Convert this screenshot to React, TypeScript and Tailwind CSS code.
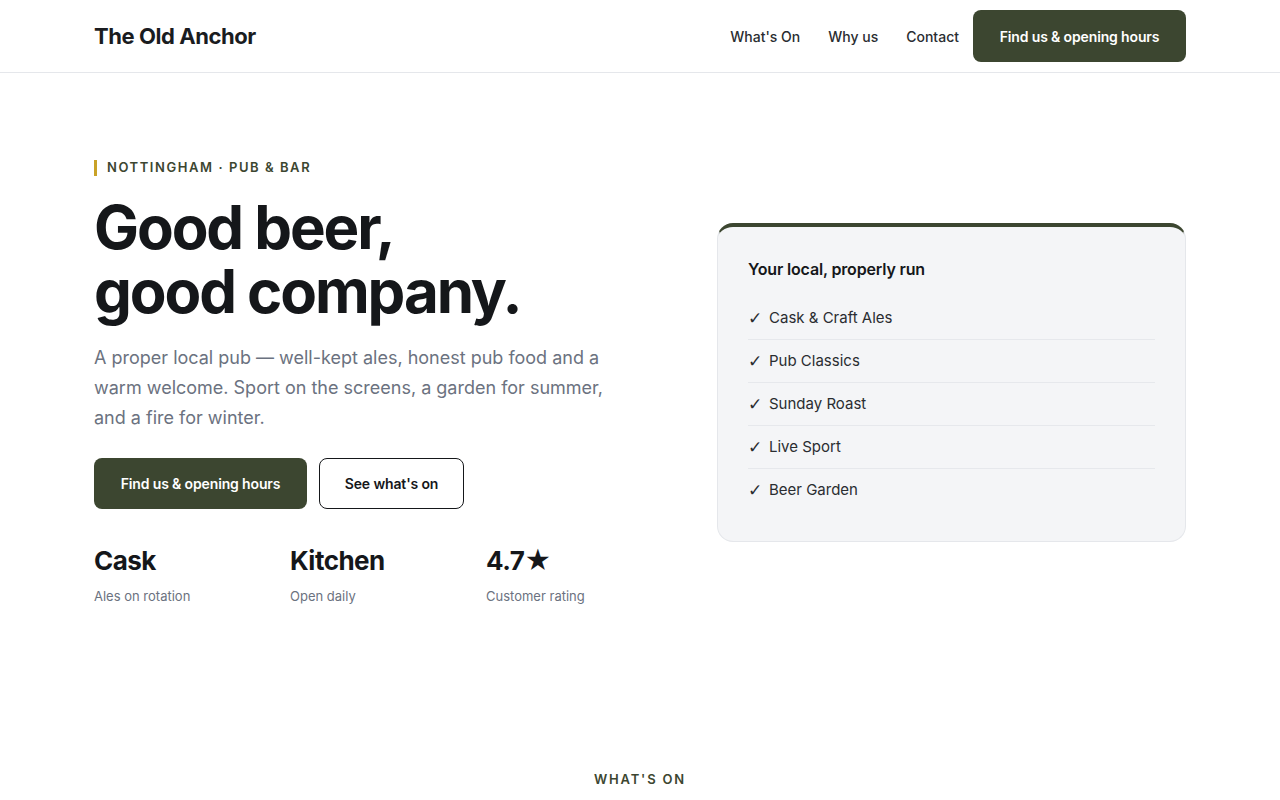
const features = ['Cask & Craft Ales', 'Pub Classics', 'Sunday Roast', 'Live Sport', 'Beer Garden']

const stats = [
  { value: 'Cask', label: 'Ales on rotation' },
  { value: 'Kitchen', label: 'Open daily' },
  { value: '4.7★', label: 'Customer rating' },
]

const display = "font-['Inter',sans-serif]"

export default function App() {
  return (
    <div className="min-h-screen bg-white font-['Inter',sans-serif] text-[#15171a]">
      {/* Header */}
      <header className="border-b border-gray-200">
        <div className="mx-auto flex h-[72px] max-w-[1092px] items-center justify-between">
          <a className={`${display} text-[22px] font-bold tracking-[-0.02em] text-[#1a1c1f]`}>The Old Anchor</a>
          <nav className="flex items-center">
            <a className="px-[14px] text-[14px] font-medium text-[#2a2d31]">What's On</a>
            <a className="px-[14px] text-[14px] font-medium text-[#2a2d31]">Why us</a>
            <a className="px-[14px] text-[14px] font-medium text-[#2a2d31]">Contact</a>
            <button className="h-[52px] w-[213px] rounded-lg bg-[#3c4630] text-[14px] font-semibold tracking-[-0.01em] text-white">
              Find us &amp; opening hours
            </button>
          </nav>
        </div>
      </header>

      {/* Hero */}
      <section className="mx-auto grid max-w-[1092px] grid-cols-[559px_469px] items-center gap-16 pt-[85px] pb-[80px]">
        <div>
          <div className="flex items-center gap-[10px]">
            <span className="h-4 w-[3px] bg-[#c9a227]" />
            <span className="text-[13px] font-semibold tracking-[0.12em] text-[#3c4630]">NOTTINGHAM · PUB &amp; BAR</span>
          </div>
          <h1 className={`${display} mt-[17px] text-[60px] font-bold leading-[64px] tracking-[-0.035em] text-[#15171a]`}>
            <span className="block">Good beer,</span>
            <span className="block">good company.</span>
          </h1>
          <p className="mt-[20px] max-w-[520px] text-[18px] leading-[30px] text-[#6b7280]">
            A proper local pub — well-kept ales, honest pub food and a warm welcome. Sport on the screens, a garden for summer, and a fire for winter.
          </p>
          <div className="mt-[25px] flex gap-3">
            <button className="h-[51px] w-[213px] rounded-lg bg-[#3c4630] text-[14px] font-semibold tracking-[-0.01em] text-white">
              Find us &amp; opening hours
            </button>
            <button className="h-[51px] w-[145px] rounded-lg border border-[#15171a] bg-white text-[14px] font-semibold tracking-[-0.01em] text-[#15171a]">
              See what's on
            </button>
          </div>
          <div className="mt-[35px] grid grid-cols-[196px_196px_1fr]">
            {stats.map((s) => (
              <div key={s.label}>
                <div className={`${display} text-[26px] font-bold leading-[34px] tracking-[-0.02em] text-[#15171a]`}>{s.value}</div>
                <div className="mt-[9px] text-[13px] text-[#6b7280]">{s.label}</div>
              </div>
            ))}
          </div>
        </div>

        <div className="rounded-2xl border border-gray-200 border-t-4 border-t-[#3c4630] bg-[#f4f5f7] px-[30px] pt-[30px] pb-[30px]">
          <h3 className={`${display} text-[16px] font-semibold tracking-[-0.01em] text-[#15171a]`}>Your local, properly run</h3>
          <ul className="mt-[16px]">
            {features.map((f, i) => (
              <li
                key={f}
                className={`flex items-center gap-[8px] py-[10px] text-[15px] leading-[22px] text-[#2a2d31] ${i < features.length - 1 ? 'border-b border-[#e6e8ec]' : ''}`}
              >
                <span className="w-[13px] font-['DejaVu_Sans',sans-serif] text-[17px] leading-[22px] text-[#2a2d31]">✓</span>
                {f}
              </li>
            ))}
          </ul>
        </div>
      </section>

      {/* What's on */}
      <section className="pt-[84px] pb-16">
        <div className="text-center text-[13px] font-semibold tracking-[0.14em] text-[#3c4630]">WHAT'S ON</div>
      </section>
    </div>
  )
}
